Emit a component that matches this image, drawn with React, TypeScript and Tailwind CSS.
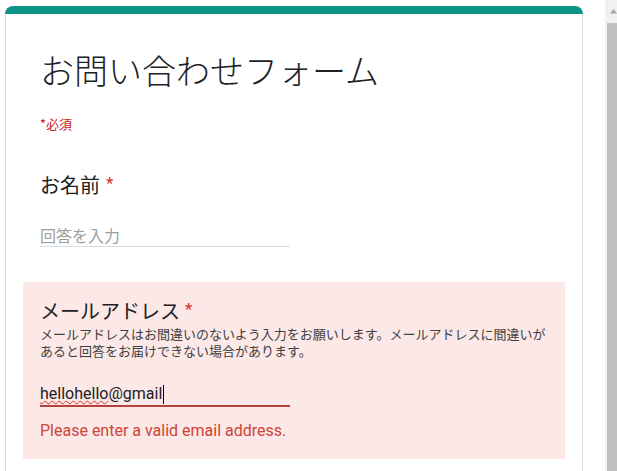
import React from "react";

const JP = {
  fontFamily: '"Noto Sans CJK JP", "Noto Sans", sans-serif',
};

const ROBOTO = { fontFamily: "Roboto, sans-serif" };

function RequiredMark({ className = "" }: { className?: string }) {
  return (
    <span className={`text-[#d93025] ${className}`} style={ROBOTO}>
      *
    </span>
  );
}

function ScrollBar() {
  return (
    <div className="flex h-full w-[12px] shrink-0 flex-col bg-[#f1f1f1]">
      <div className="flex h-[23px] items-center justify-center pl-[4px]">
        <svg width="7" height="5" viewBox="0 0 7 5">
          <path d="M3.5 0 L7 4.5 L0 4.5 Z" fill="#a3a3a3" />
        </svg>
      </div>
      <div className="ml-[2px] flex-1 bg-[#c1c1c1]" />
    </div>
  );
}

function NameQuestion() {
  return (
    <div className="mt-[38px] pl-[17px]">
      <div className="flex items-start text-[20px] leading-[28px]">
        <span>お名前</span>
        <RequiredMark className="ml-[6px] text-[17px] leading-[24px]" />
      </div>
      <div className="mt-[26px] w-[250px] border-b border-[#dadce0] text-[16px] leading-[21px] text-[#9e9e9e]">
        回答を入力
      </div>
    </div>
  );
}

function EmailQuestion() {
  return (
    <div className="mt-[35px] bg-[#fce8e6] px-[17px] pb-[18px] pt-[14px]">
      <div className="flex items-start text-[20px] leading-[29px]">
        <span>メールアドレス</span>
        <RequiredMark className="ml-[5px] text-[17px] leading-[26px]" />
      </div>
      <p className="text-[13px] leading-[17px] text-[#3c4043]">
        メールアドレスはお間違いのないよう入力をお願いします。メールアドレスに間違いがあると回答をお届けできない場合があります。
      </p>
      <div
        className="mt-[24px] flex w-[250px] items-center border-b-2 border-[#b5423b] text-[16px] leading-[22px] text-[#202124]"
        style={ROBOTO}
      >
        <span className="underline decoration-[#d93025] decoration-wavy decoration-1 underline-offset-[1px]">
          hellohello
        </span>
        <span>@gmail</span>
        <span className="ml-[1px] h-[19px] w-[1px] bg-black" />
      </div>
      <p className="mt-[14px] text-[16px] leading-[20px] text-[#cf4437]" style={ROBOTO}>
        Please enter a valid email address.
      </p>
    </div>
  );
}

export default function App() {
  return (
    <div
      className="flex h-[471px] w-[617px] overflow-hidden bg-white text-[#202124]"
      style={JP}
    >
      <div className="ml-[5px] mt-[6px] w-[578px] shrink-0">
        <div className="h-[8px] rounded-t-[8px] bg-[#0e9384]" />
        <div className="h-[520px] border-x border-[#dadce0] px-[17px] pt-[36px]">
          <div className="pl-[17px]">
            <h1 className="text-[34px] font-light leading-[40px]">
              お問い合わせフォーム
            </h1>
            <p className="mt-[25px] text-[13px] leading-[18px] text-[#c5221f]">
              *必須
            </p>
          </div>
          <NameQuestion />
          <EmailQuestion />
        </div>
      </div>
      <div className="flex-1" />
      <ScrollBar />
    </div>
  );
}
